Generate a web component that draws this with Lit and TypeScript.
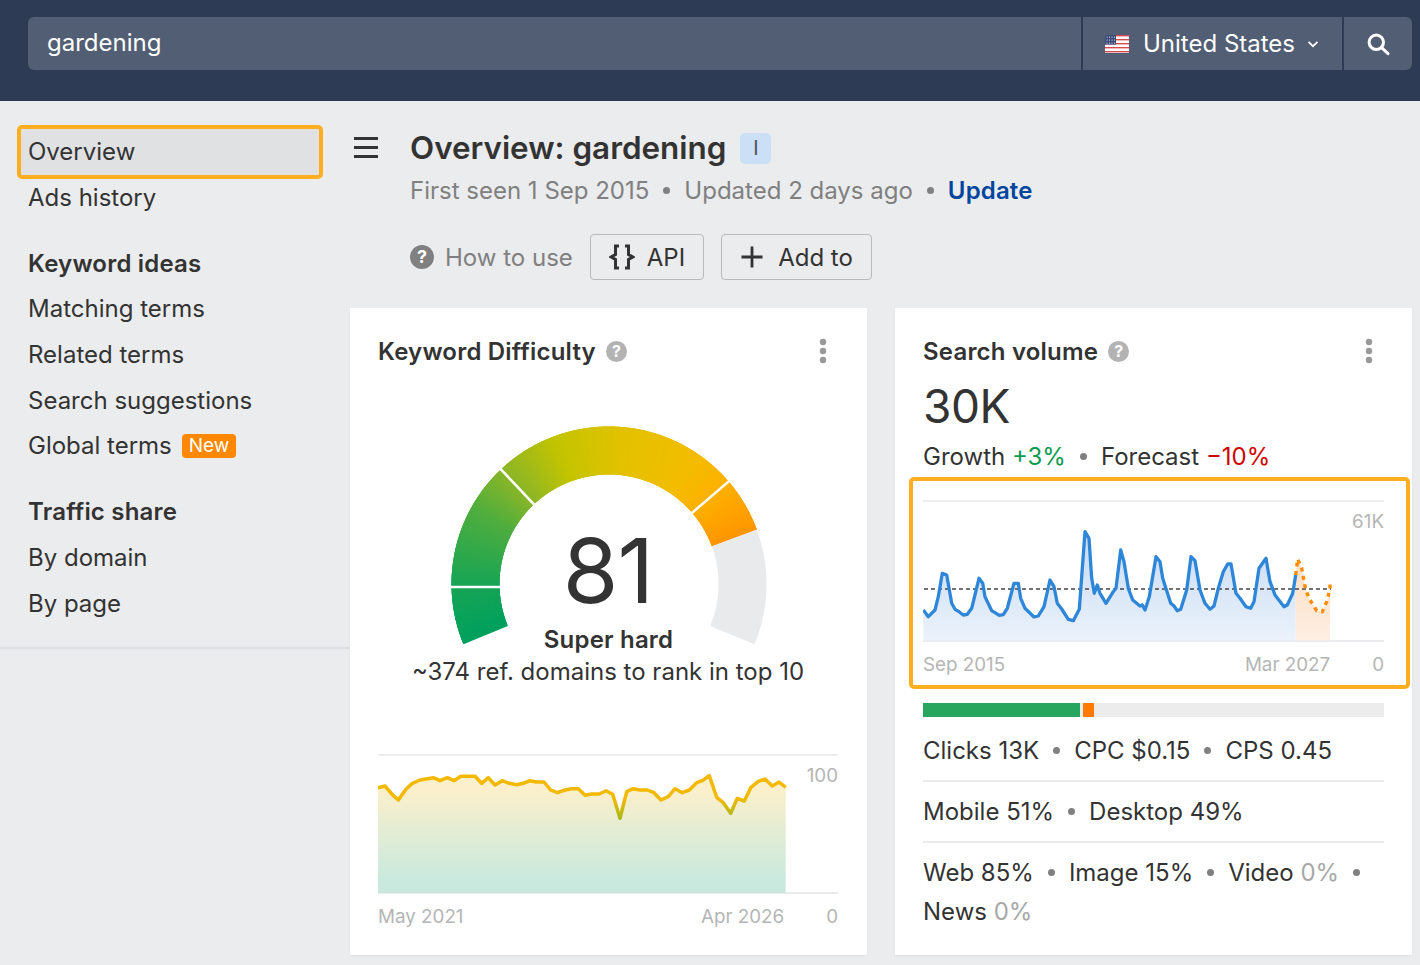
import { LitElement, css, html, svg } from 'lit';
import { customElement } from 'lit/decorators.js';

type Pt = [number, number];

// traced from the reference at 3x, so offsets convert them to chart pixels
const trace = (raw: number[], dx: number, dy: number): Pt[] => {
  const out: Pt[] = [];
  for (let i = 0; i < raw.length; i += 2) out.push([raw[i] / 3 + dx, raw[i + 1] / 3 + dy]);
  return out;
};

const volume: Pt[] = [
  ...trace([40,360,55,380,75,360,85,320,97,250,110,255,125,340,135,358,147,365,160,375,172,373,185,355,207,265,218,280,225,320,245,362,268,376,280,374,292,355,312,280,325,280,332,325,345,355,372,381,385,378,402,350,420,270,432,290,442,340,455,357,475,388,490,392,508,358,525,125,537,145,545,265,553,310,562,285,570,310,588,340,610,305,618,295,632,180,642,215,655,295,668,330,690,348,697,345,705,360,718,320,738,200], -13, -10),
  ...trace([0,215,8,265,32,340,42,348,52,362,62,358,80,300,93,200,105,212,120,300,135,340,150,358,162,348,175,295,190,245,203,222,213,222,228,310,240,325,258,350,272,355,282,335,297,235,318,205,330,275,345,315,372,350,382,345,398,310,407,255], 237, -10),
];
const forecast: Pt[] = trace([407,255,413,207,425,235,437,300,450,330,470,362,487,365,500,335,510,297,510,280], 237, -10);

const difficulty: Pt[] = [
  ...trace([24,113,45,108,68,135,85,150,108,118,127,100,150,90,190,83,210,92,232,83,252,92,272,79,315,79,335,100,355,83,375,105,397,92,418,100,440,104,460,100,480,92,500,96,522,96,542,120,562,128,585,120,605,116,625,116,645,136,665,132,688,132], -8, -4),
  ...trace([18,122,38,133,60,205,80,125,100,116,120,120,142,120,162,128,183,150,205,140,225,116,247,128,268,120,290,98,307,92,328,77,350,142,370,158,392,190,412,145,433,153,453,112,475,94,495,87,517,108,537,96,557,112], 222, -4),
];

const line = (pts: Pt[]) => pts.map((p) => `${p[0].toFixed(1)},${p[1].toFixed(1)}`).join(' ');
const area = (pts: Pt[], base: number) =>
  `${pts[0][0].toFixed(1)},${base} ${line(pts)} ${pts[pts.length - 1][0].toFixed(1)},${base}`;

// gauge: theta is degrees clockwise from the left horizontal
const CX = 158;
const CY = 158;
const R_OUT = 157.5;
const R_IN = 109.5;
const gp = (theta: number, r: number) => {
  const a = (theta * Math.PI) / 180;
  return `${(CX - r * Math.cos(a)).toFixed(2)},${(CY - r * Math.sin(a)).toFixed(2)}`;
};

const stops: [number, number[]][] = [
  [-22.5, [0, 160, 95]],
  [0, [24, 165, 85]],
  [30, [82, 174, 62]],
  [47, [140, 182, 40]],
  [70, [196, 196, 0]],
  [95, [226, 194, 0]],
  [125, [244, 188, 0]],
  [140, [253, 176, 0]],
  [160, [255, 149, 0]],
];

const colorAt = (t: number) => {
  for (let i = 1; i < stops.length; i++) {
    if (t <= stops[i][0]) {
      const [t0, c0] = stops[i - 1];
      const [t1, c1] = stops[i];
      const k = (t - t0) / (t1 - t0);
      return `rgb(${c0.map((c, j) => Math.round(c + (c1[j] - c) * k)).join(',')})`;
    }
  }
  return 'rgb(255,149,0)';
};

const arc = (from: number, to: number) => {
  const n = Math.max(1, Math.ceil(to - from));
  const pts: string[] = [];
  for (let i = 0; i <= n; i++) pts.push(gp(from + ((to - from) * i) / n, R_OUT));
  for (let i = n; i >= 0; i--) pts.push(gp(from + ((to - from) * i) / n, R_IN));
  return pts.join(' ');
};

const wedges: { from: number; to: number; color: string }[] = [];
for (let t = -22.5; t < 159.7; t += 0.4) {
  wedges.push({ from: t, to: Math.min(t + 1.2, 159.7), color: colorAt(t + 0.2) });
}

const helpIcon = html`<span class="help">?</span>`;
const kebab = html`<svg class="kebab" width="8" height="26" viewBox="0 0 8 26" fill="#999">
  <circle cx="4" cy="4" r="3.2"></circle><circle cx="4" cy="13" r="3.2"></circle><circle cx="4" cy="22" r="3.2"></circle>
</svg>`;

@customElement('app-root')
export class AppRoot extends LitElement {
  renderFlag() {
    const stripes = [0, 1, 2, 3, 4, 5, 6, 7, 8];
    return html`<svg class="flag" width="24" height="18" viewBox="0 0 24 18">
      <rect width="24" height="18" fill="#fff"></rect>
      ${stripes.map((i) => (i % 2 === 0 ? svg`<rect y=${i * 2} width="24" height="1.4" fill="#d9474f"></rect>` : null))}
      <rect width="11" height="9.6" fill="#3c4a78"></rect>
      ${[1.5, 4, 6.5, 9].flatMap((x) =>
        [1.6, 4.6, 7.6].map((y) => svg`<rect x=${x} y=${y} width="1" height="1" fill="#dfe3ee"></rect>`),
      )}
    </svg>`;
  }

  renderGauge() {
    return html`<svg class="dial" width="316" height="222" viewBox="0 0 316 222">
      <polygon points=${arc(159.7, 202.5)} fill="#e9eaec"></polygon>
      ${wedges.map((w) => svg`<polygon points=${arc(w.from, w.to)} fill=${w.color}></polygon>`)}
      <line x1="-2" y1="161" x2="50" y2="161" stroke="#fff" stroke-width="2.6"></line>
      ${[46.7, 139.4].map((t) => {
        const [x1, y1] = gp(t, 107).split(',');
        const [x2, y2] = gp(t, 160).split(',');
        return svg`<line x1=${x1} y1=${y1} x2=${x2} y2=${y2} stroke="#fff" stroke-width="2.6"></line>`;
      })}
    </svg>`;
  }

  renderDifficultyChart() {
    return html`<svg width="460" height="140" viewBox="0 0 460 140">
      <defs>
        <linearGradient id="kdFill" x1="0" y1="35" x2="0" y2="125" gradientUnits="userSpaceOnUse">
          <stop offset="0" stop-color="#fbf0cb"></stop>
          <stop offset="1" stop-color="#cae9de"></stop>
        </linearGradient>
        <linearGradient id="kdLine" x1="0" y1="25" x2="0" y2="65" gradientUnits="userSpaceOnUse">
          <stop offset="0.5" stop-color="#f2b900"></stop>
          <stop offset="1" stop-color="#a5b81a"></stop>
        </linearGradient>
      </defs>
      <rect width="460" height="2" fill="#eeeeee"></rect>
      <rect y="138" width="460" height="2" fill="#ebebeb"></rect>
      <polygon points=${area(difficulty, 139)} fill="url(#kdFill)"></polygon>
      <polyline points=${line(difficulty)} fill="none" stroke="url(#kdLine)" stroke-width="3.5" stroke-linejoin="round"></polyline>
    </svg>`;
  }

  renderVolumeChart() {
    return html`<svg width="461" height="142" viewBox="0 0 461 142">
      <defs>
        <linearGradient id="svFill" x1="0" y1="40" x2="0" y2="141" gradientUnits="userSpaceOnUse">
          <stop offset="0" stop-color="#c9dcf4"></stop>
          <stop offset="1" stop-color="#ebf2fb"></stop>
        </linearGradient>
        <linearGradient id="fcFill" x1="0" y1="60" x2="0" y2="141" gradientUnits="userSpaceOnUse">
          <stop offset="0" stop-color="#fddfc6"></stop>
          <stop offset="1" stop-color="#fdeee2"></stop>
        </linearGradient>
      </defs>
      <rect width="461" height="2" fill="#eeeeee"></rect>
      <rect y="140" width="461" height="2" fill="#e9ebee"></rect>
      <polygon points=${area(volume, 140.5)} fill="url(#svFill)"></polygon>
      <polygon points=${area(forecast, 140.5)} fill="url(#fcFill)"></polygon>
      <line x1="1" y1="89" x2="408" y2="89" stroke="#444" stroke-width="1.4" stroke-dasharray="4 3"></line>
      <polyline points=${line(volume)} fill="none" stroke="#2e86d9" stroke-width="3.3" stroke-linejoin="round"></polyline>
      <polyline points=${line(forecast)} fill="none" stroke="#ff8c00" stroke-width="3.4" stroke-dasharray="4 4.5"></polyline>
    </svg>`;
  }

  render() {
    return html`
      <header class="top">
        <div class="search">
          <div class="query"><span>gardening</span></div>
          <div class="country">
            ${this.renderFlag()}
            <span>United States</span>
            <svg width="14" height="14" viewBox="0 0 14 14" fill="none" stroke="#fff" stroke-width="1.7">
              <path d="M2.5 4.8 7 9.2l4.5-4.4"></path>
            </svg>
          </div>
          <div class="go">
            <svg width="24" height="24" viewBox="0 0 24 24" fill="none" stroke="#fff" stroke-width="3">
              <circle cx="10.3" cy="10.3" r="7.2"></circle>
              <path d="m15.6 15.6 6.4 6" stroke-linecap="round"></path>
            </svg>
          </div>
        </div>
      </header>
      <div class="page">
        <nav class="side">
          <a class="item current">Overview</a>
          <a class="item">Ads history</a>
          <h4>Keyword ideas</h4>
          <a class="item">Matching terms</a>
          <a class="item">Related terms</a>
          <a class="item">Search suggestions</a>
          <a class="item">Global terms <span class="new">New</span></a>
          <h4>Traffic share</h4>
          <a class="item">By domain</a>
          <a class="item">By page</a>
        </nav>
        <main class="main">
          <div class="head">
            <svg class="burger" width="24" height="22" viewBox="0 0 24 22" fill="#333">
              <rect x="0" y="0" width="24" height="3"></rect>
              <rect x="0" y="9" width="24" height="3"></rect>
              <rect x="0" y="18" width="24" height="3"></rect>
            </svg>
            <div class="head-text">
              <div class="title"><h1>Overview: gardening</h1><span class="intent">I</span></div>
              <div class="meta">
                <span>First seen 1 Sep 2015</span><i class="dot"></i><span>Updated 2 days ago</span><i class="dot"></i>
                <a class="update">Update</a>
              </div>
              <div class="tools">
                <span class="howto"><span class="help big">?</span>How to use</span>
                <button class="btn">
                  <svg width="26" height="26" viewBox="0 0 26 26" fill="none" stroke="#333" stroke-width="3">
                    <path d="M10 2H6.5v8.5L2 13l4.5 2.5V24H10"></path>
                    <path d="M16 2h3.5v8.5L24 13l-4.5 2.5V24H16"></path>
                  </svg>
                  API
                </button>
                <button class="btn add">
                  <svg width="24" height="24" viewBox="0 0 24 24" fill="none" stroke="#333" stroke-width="2.8">
                    <path d="M12 1.5v21M1.5 12h21"></path>
                  </svg>
                  Add to
                </button>
              </div>
            </div>
          </div>
          <div class="cards">
            <section class="card kd">
              <div class="card-head"><h3>Keyword Difficulty</h3>${helpIcon}${kebab}</div>
              <div class="gauge">
                ${this.renderGauge()}
                <div class="score">81</div>
                <div class="grade">Super hard</div>
                <div class="hint">~374 ref. domains to rank in top 10</div>
              </div>
              <div class="chart">
                ${this.renderDifficultyChart()}
                <span class="max">100</span>
                <div class="axis"><span>May 2021</span><span class="end">Apr 2026</span><span>0</span></div>
              </div>
            </section>
            <section class="card sv">
              <div class="card-head"><h3>Search volume</h3>${helpIcon}${kebab}</div>
              <div class="volume">30K</div>
              <div class="row growth">
                <span>Growth <b class="up">+3%</b></span><i class="dot"></i><span>Forecast <b class="down">−10%</b></span>
              </div>
              <div class="chart framed">
                ${this.renderVolumeChart()}
                <span class="max">61K</span>
                <div class="axis"><span>Sep 2015</span><span class="end">Mar 2027</span><span>0</span></div>
              </div>
              <div class="share">
                <span class="organic"></span><span class="paid"></span>
              </div>
              <div class="row stat">
                <span>Clicks 13K</span><i class="dot"></i><span>CPC $0.15</span><i class="dot"></i><span>CPS 0.45</span>
              </div>
              <div class="row stat">
                <span>Mobile 51%</span><i class="dot"></i><span>Desktop 49%</span>
              </div>
              <div class="row stat wrap">
                <span>Web 85%</span><i class="dot"></i><span>Image 15%</span><i class="dot"></i><span>Video <em>0%</em></span><i class="dot"></i><span>News <em>0%</em></span>
              </div>
            </section>
          </div>
        </main>
      </div>
    `;
  }

  static styles = css`
    :host {
      display: block;
      height: 965px;
      overflow: hidden;
      background: #ebecee;
      color: #333;
      font-family: Inter, 'Liberation Sans', sans-serif;
      font-size: 24px;
    }

    .top {
      height: 101px;
      box-sizing: border-box;
      padding: 17px 8px 0 28px;
      background: #2d3b55;
    }

    .search {
      display: flex;
      height: 53px;
      gap: 2px;
      color: #fff;
    }

    .search > div {
      display: flex;
      align-items: center;
      background: #525e73;
    }

    .query {
      flex: 1;
      padding: 0 0 2px 19px;
      border-radius: 6px 0 0 6px;
    }

    .country {
      width: 259px;
      box-sizing: border-box;
      padding-left: 22px;
    }

    .flag {
      margin-right: 14px;
    }

    .country span {
      margin-right: 11px;
    }

    .go {
      width: 68px;
      justify-content: center;
      border-radius: 0 6px 6px 0;
    }

    .page {
      display: flex;
      align-items: flex-start;
    }

    .side {
      width: 350px;
      flex: none;
      box-sizing: border-box;
      height: 548px;
      padding: 28px 0 0 28px;
      border-bottom: 2px solid #dcdee1;
    }

    .item,
    .side h4 {
      display: flex;
      align-items: center;
      height: 45.7px;
      margin: 0;
    }

    .side h4 {
      margin-top: 20px;
      font-weight: 600;
      font-size: 24px;
      letter-spacing: 0.2px;
    }

    .current {
      position: relative;
      isolation: isolate;
    }

    .current::before {
      content: '';
      position: absolute;
      left: -11px;
      top: -4px;
      width: 306px;
      height: 54px;
      box-sizing: border-box;
      border: 4px solid #ffae1f;
      border-radius: 5px;
      background: #e0e1e3;
      z-index: -1;
    }

    .new {
      margin-left: 10px;
      padding: 0 7px;
      height: 24px;
      line-height: 24px;
      border-radius: 4px;
      background: #ff8800;
      color: #fff;
      font-size: 19px;
    }

    .main {
      flex: 1;
      padding-right: 8px;
    }

    .head {
      display: flex;
      height: 207px;
    }

    .burger {
      flex: none;
      margin: 36px 32px 0 4px;
    }

    .title {
      display: flex;
      align-items: center;
      height: 40px;
      margin-top: 27px;
      gap: 14px;
    }

    h1 {
      margin: 0;
      font-size: 31.4px;
      font-weight: 600;
    }

    .intent {
      width: 31px;
      height: 31px;
      border-radius: 5px;
      background: #cbe0f7;
      color: #555;
      font-size: 20px;
      line-height: 31px;
      text-align: center;
    }

    .meta {
      display: flex;
      align-items: center;
      height: 36px;
      margin-top: 4px;
      color: #808080;
    }

    .dot {
      flex: none;
      width: 7px;
      height: 7px;
      margin: 0 14px;
      border-radius: 50%;
      background: #808080;
    }

    .update {
      color: #00459e;
      font-weight: 600;
      letter-spacing: 0.15px;
    }

    .tools {
      display: flex;
      align-items: center;
      gap: 17px;
      margin-top: 26px;
    }

    .howto {
      display: flex;
      align-items: center;
      gap: 11px;
      color: #808080;
    }

    .btn {
      display: flex;
      align-items: center;
      gap: 12px;
      height: 46px;
      padding: 0 18px;
      border: 1px solid #b8b9bb;
      border-radius: 4px;
      background: transparent;
      color: #333;
      font: inherit;
    }

    .btn.add {
      gap: 14px;
    }

    .help {
      display: inline-block;
      width: 21px;
      height: 21px;
      flex: none;
      border-radius: 50%;
      background: #b3b3b3;
      color: #fff;
      font-size: 16px;
      font-weight: 700;
      line-height: 21px;
      text-align: center;
    }

    .help.big {
      width: 24px;
      height: 24px;
      background: #808080;
      font-size: 18px;
      line-height: 24px;
    }

    .cards {
      display: grid;
      grid-template-columns: 517px 517px;
      gap: 28px;
    }

    .card {
      height: 647px;
      box-sizing: border-box;
      padding: 0 28px;
      background: #fff;
      box-shadow: 0 1px 2px rgba(0, 0, 0, 0.06);
    }

    .kd {
      padding-right: 29px;
    }

    .card-head {
      display: flex;
      align-items: center;
      gap: 10px;
      height: 32px;
      padding-top: 27px;
    }

    h3 {
      margin: 0;
      font-size: 24px;
      font-weight: 600;
      letter-spacing: 0.2px;
    }

    .kebab {
      margin: 0 11px 0 auto;
    }

    .gauge {
      position: relative;
      display: flex;
      flex-direction: column;
      align-items: center;
      height: 387px;
      padding-top: 59px;
      box-sizing: border-box;
    }

    .dial {
      position: absolute;
      left: 72.5px;
      top: 59px;
    }

    .score {
      position: relative;
      margin-top: 88px;
      font-size: 90px;
      letter-spacing: -1px;
      line-height: 114px;
    }

    .grade {
      position: relative;
      left: 0.5px;
      margin-top: -4px;
      font-weight: 600;
      letter-spacing: 0.2px;
      line-height: 32px;
    }

    .hint {
      line-height: 32px;
    }

    .chart {
      position: relative;
    }

    .chart svg {
      display: block;
    }

    .max {
      position: absolute;
      right: 0;
      top: 10px;
      color: #b5b5b5;
      font-size: 18.8px;
    }

    .axis {
      display: flex;
      justify-content: space-between;
      margin-top: 10px;
      color: #b5b5b5;
      font-size: 18.8px;
      line-height: 26px;
    }

    .end {
      margin: 0 42px 0 auto;
    }

    .volume {
      height: 64px;
      margin-top: 7px;
      font-size: 46px;
      letter-spacing: -0.5px;
      line-height: 64px;
    }

    .row {
      display: flex;
      align-items: center;
    }

    .row b {
      font-weight: 400;
    }

    .growth {
      height: 38px;
      margin-top: -1px;
    }

    .up {
      color: #0a9a50;
    }

    .down {
      color: #d10000;
    }

    .framed {
      margin-top: 25px;
    }

    .framed::after {
      content: '';
      position: absolute;
      left: -14px;
      right: -26px;
      top: -23px;
      height: 212px;
      box-sizing: border-box;
      border: 4px solid #ffae1f;
      border-radius: 5px;
    }

    .share {
      display: flex;
      height: 14px;
      margin-top: 25px;
      background: #ececec;
    }

    .organic {
      width: 157px;
      background: #26a65f;
      margin-right: 3px;
    }

    .paid {
      width: 11px;
      background: #ff7a00;
    }

    .stat {
      min-height: 59px;
      border-bottom: 2px solid #ebebeb;
    }

    .share + .stat {
      margin-top: 4px;
    }

    .wrap {
      flex-wrap: wrap;
      border-bottom: 0;
      padding-top: 10px;
      line-height: 39px;
      min-height: 0;
    }

    em {
      font-style: normal;
      color: #a8a8a8;
    }
  `;
}

declare global {
  interface HTMLElementTagNameMap {
    'app-root': AppRoot;
  }
}
